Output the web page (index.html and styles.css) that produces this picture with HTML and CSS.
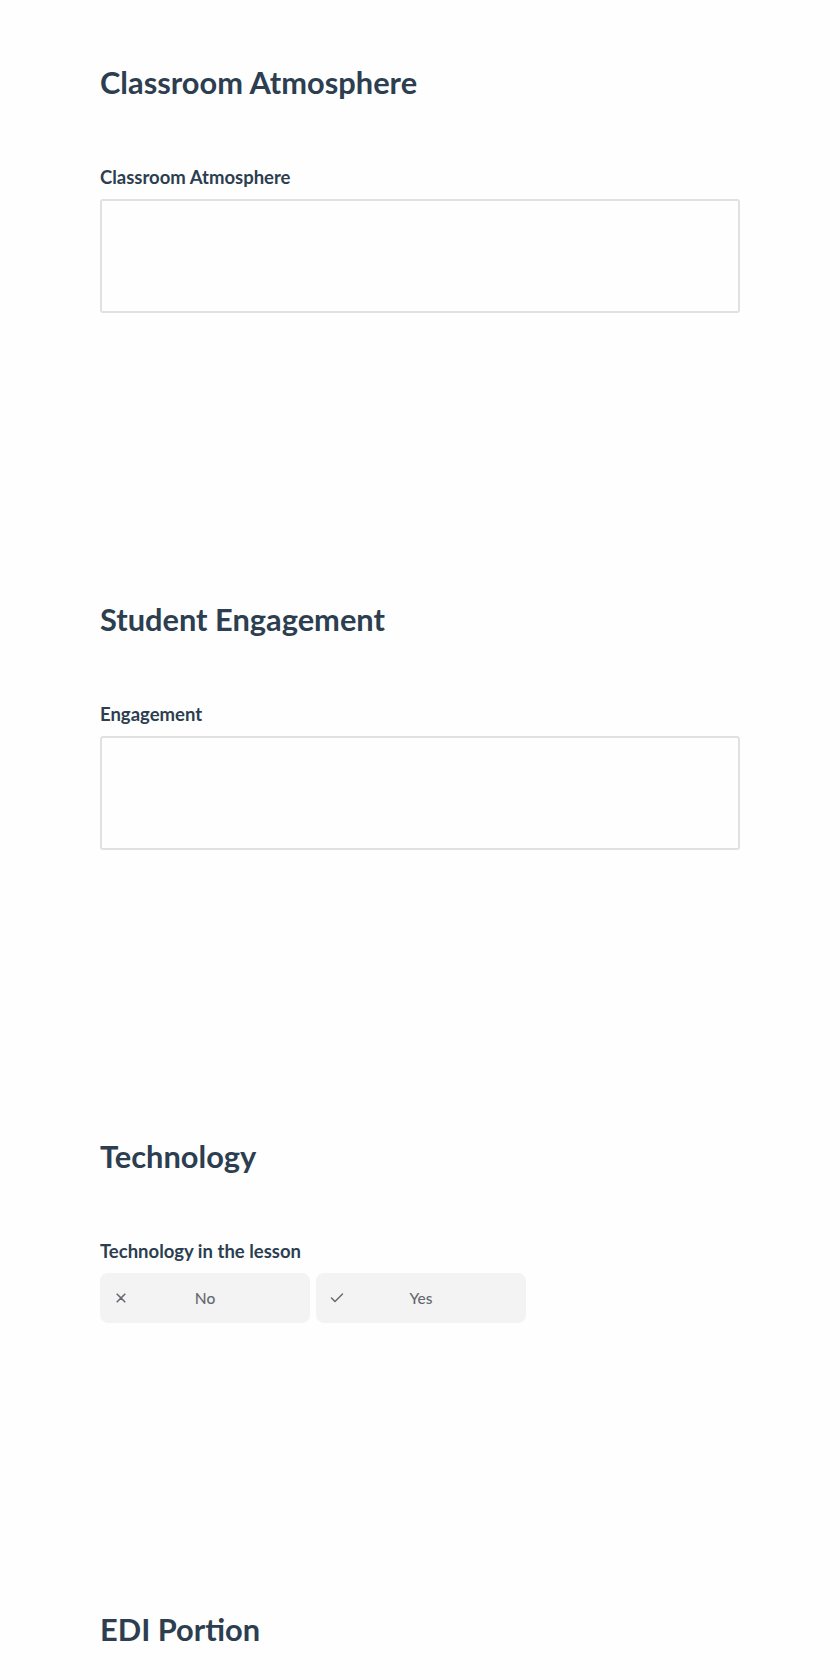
FILE: index.html
```html
<!DOCTYPE html>
<html lang="en">
<head>
<meta charset="utf-8">
<title>Observation Form</title>
<link rel="stylesheet" href="styles.css">
</head>
<body>
<main class="form">
  <section class="section">
    <h2 class="section-title">Classroom Atmosphere</h2>
    <div class="field">
      <label class="field-label" for="atmosphere">Classroom Atmosphere</label>
      <textarea id="atmosphere" class="textarea"></textarea>
    </div>
  </section>
  <section class="section">
    <h2 class="section-title">Student Engagement</h2>
    <div class="field">
      <label class="field-label" for="engagement">Engagement</label>
      <textarea id="engagement" class="textarea"></textarea>
    </div>
  </section>
  <section class="section">
    <h2 class="section-title">Technology</h2>
    <div class="field">
      <span class="field-label">Technology in the lesson</span>
      <div class="choices">
        <button class="choice" type="button">
          <svg class="choice-icon" width="16" height="16" viewBox="0 0 16 16"><path d="M4.2 4.2L11.8 11.8M11.8 4.2L4.2 11.8" fill="none" stroke="#666a70" stroke-width="1.6" stroke-linecap="round"/></svg>
          <span class="choice-text">No</span>
        </button>
        <button class="choice" type="button">
          <svg class="choice-icon" width="16" height="16" viewBox="0 0 16 16"><path d="M2.5 8L6 11.5L13.5 4" fill="none" stroke="#666a70" stroke-width="1.5" stroke-linecap="round" stroke-linejoin="round"/></svg>
          <span class="choice-text">Yes</span>
        </button>
      </div>
    </div>
  </section>
  <section class="section">
    <h2 class="section-title">EDI Portion</h2>
  </section>
</main>
</body>
</html>
```
FILE: styles.css
```css
html, body {
  margin: 0;
  padding: 0;
  background: #fefefe;
}
body {
  font-family: Lato, "Open Sans", "Liberation Sans", sans-serif;
  color: #2c3e50;
}
.form {
  width: 640px;
  padding: 63px 0 0 100px;
}
.section {
  display: flex;
  flex-direction: column;
  margin-bottom: 287px;
}
.section-title {
  margin: 0;
  font-size: 30.8px;
  line-height: 39px;
  font-weight: 700;
  color: #2c3e50;
}
.field {
  display: flex;
  flex-direction: column;
  margin-top: 64px;
}
.field-label {
  font-size: 18.5px;
  line-height: 22px;
  font-weight: 700;
  color: #2c3e50;
  margin-bottom: 11px;
}
.textarea {
  display: block;
  box-sizing: border-box;
  width: 640px;
  height: 114px;
  margin: 0;
  border: 2px solid #e1e1e1;
  border-radius: 3px;
  background: #fefefe;
  resize: none;
  font-family: inherit;
}
.choices {
  display: flex;
  gap: 6px;
}
.choice {
  display: grid;
  grid-template-columns: 1fr auto 1fr;
  align-items: center;
  box-sizing: border-box;
  width: 210px;
  height: 50px;
  padding: 0 13px;
  margin: 0;
  border: none;
  border-radius: 8px;
  background: #f3f3f3;
  font-family: inherit;
  font-size: 15.5px;
  font-weight: 500;
  color: #666a70;
}
.choice-icon {
  justify-self: start;
  display: block;
}
.choice-text {
  grid-column: 2;
}
```
